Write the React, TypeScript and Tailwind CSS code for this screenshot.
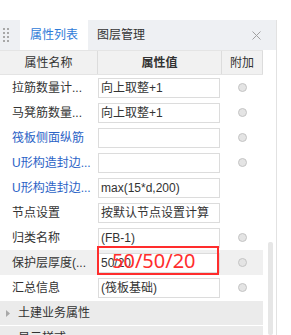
import React from "react";

type Row = { name: string; value: string; blue?: boolean; radio: boolean; hl?: boolean; red?: boolean };

const rows: Row[] = [
  { name: "拉筋数量计...", value: "向上取整+1", radio: true },
  { name: "马凳筋数量...", value: "向上取整+1", radio: true },
  { name: "筏板侧面纵筋", value: "", blue: true, radio: true },
  { name: "U形构造封边...", value: "", blue: true, radio: true },
  { name: "U形构造封边...", value: "max(15*d,200)", blue: true, radio: false },
  { name: "节点设置", value: "按默认节点设置计算", radio: false },
  { name: "归类名称", value: "(FB-1)", radio: true },
  { name: "保护层厚度(...", value: "50/20", radio: true, hl: true, red: true },
  { name: "汇总信息", value: "(筏板基础)", radio: true },
];

const groups = ["土建业务属性", "显示样式"];

function Grip() {
  return (
    <svg width="6" height="14" viewBox="0 0 6 14" className="block">
      {[0, 1, 2, 3].map((r) =>
        [0, 1].map((c) => (
          <rect key={`${r}-${c}`} x={c * 4} y={r * 4} width="2" height="2" fill="#a8a8a8" />
        ))
      )}
    </svg>
  );
}

export default function App() {
  return (
    <div
      className="w-[291px] h-[335px] bg-white overflow-hidden pt-[20px]"
      style={{ fontFamily: '"Liberation Sans", "Noto Sans CJK SC", sans-serif' }}
    >
      <div className="w-[277px] h-[315px] border-r border-[#e2e2e2] flex flex-col">
        {/* tab bar */}
        <div className="h-[30px] bg-[#eef0f3] flex items-stretch shrink-0">
          <div className="w-[20px] flex items-center pl-[3px]">
            <Grip />
          </div>
          <div className="w-[68px] bg-white flex items-center justify-center text-[12px] text-[#2f7bd8]">
            属性列表
          </div>
          <div className="flex items-center pl-[9px] text-[12px] text-[#333]">图层管理</div>
          <div className="flex-1" />
          <div className="w-[28px] flex items-center justify-start pl-[4px]">
            <svg width="9" height="9" viewBox="0 0 9 9">
              <path d="M0.5 0.5 L8.5 8.5 M8.5 0.5 L0.5 8.5" stroke="#a0a0a0" strokeWidth="1" />
            </svg>
          </div>
        </div>
        {/* body */}
        <div className="flex flex-1 overflow-hidden">
          <div className="w-[263px] flex flex-col">
            {/* header */}
            <div className="h-[25px] flex bg-[#f1f1f1] border-y border-[#e4e4e4] shrink-0 text-[12px] text-[#333]">
              <div className="w-[98px] border-r border-[#dcdcdc] flex items-center justify-center">属性名称</div>
              <div className="w-[124px] border-r border-[#dcdcdc] flex items-center justify-center font-bold">属性值</div>
              <div className="w-[41px] border-r border-[#dcdcdc] flex items-center justify-center">附加</div>
            </div>
            {rows.map((r, i) => (
              <div key={i} className={`h-[25px] flex shrink-0 ${r.hl ? "bg-[#f0f0f0]" : ""}`}>
                <div
                  className={`w-[98px] flex items-center pl-[12px] text-[12px] whitespace-nowrap overflow-hidden ${
                    r.blue ? "text-[#2b63c6]" : "text-[#333]"
                  }`}
                >
                  {r.name}
                </div>
                <div className="w-[124px] flex items-center relative">
                  <div className="w-[122px] h-[20px] border border-[#dcdcdc] bg-white flex items-center pl-[2px] text-[12px] text-[#333] whitespace-nowrap overflow-hidden">
                    {r.value}
                  </div>
                  {r.red && (
                    <div className="absolute left-[-1px] top-[-4px] w-[122px] h-[29px] border-2 border-[#ff2d2d] flex items-center pl-[13px]">
                      <span
                        className="text-[20px] leading-none text-[#ff2d2d]"
                        style={{ fontFamily: '"Noto Sans", sans-serif' }}
                      >
                        50/50/20
                      </span>
                    </div>
                  )}
                </div>
                <div className="w-[41px] flex items-center justify-center">
                  {r.radio && (
                    <div className="w-[9px] h-[9px] rounded-full border border-[#c4c4c4] bg-[#e4e4e4]" />
                  )}
                </div>
              </div>
            ))}
            {groups.map((g, i) => (
              <div key={i} className="h-[24px] mt-[1px] bg-[#ebebeb] flex items-center shrink-0">
                <div className="w-[18px] flex items-center pl-[6px]">
                  <svg width="4" height="7" viewBox="0 0 4 7">
                    <path d="M0 0 L4 3.5 L0 7 Z" fill="#a8a8a8" />
                  </svg>
                </div>
                <span className="text-[12px] text-[#333]">{g}</span>
              </div>
            ))}
          </div>
          {/* scrollbar */}
          <div className="w-[14px] flex flex-col items-center pl-[1px]">
            <div className="mt-[192px] w-[5px] flex-1 bg-[#e6e6e6] rounded-[2px]" />
          </div>
        </div>
      </div>
    </div>
  );
}
